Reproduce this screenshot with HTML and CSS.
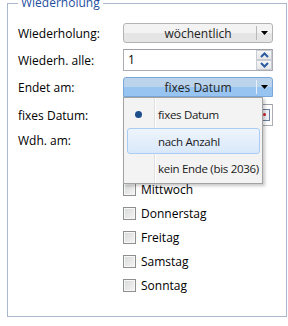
FILE: index.html
```html
<!DOCTYPE html>
<html lang="de">
  <head>
    <meta name="viewport" content="width=device-width, initial-scale=1.0" />
    <link rel="stylesheet" href="styles.css">
  </head>
  <body>
    <fieldset class="group">
      <legend class="group-title">Wiederholung</legend>

      <div class="form">
        <div class="row">
          <label class="lbl">Wiederholung:</label>
          <div class="combo">
            <span class="combo-text">wöchentlich</span>
            <span class="combo-btn">
              <svg width="7" height="4" viewBox="0 0 7 4"><path d="M0 0h7L3.5 4z" fill="#000"/></svg>
            </span>
          </div>
        </div>

        <div class="row row-tall">
          <label class="lbl">Wiederh. alle:</label>
          <div class="spin">
            <span class="spin-val">1</span>
            <span class="spin-btns">
              <span class="spin-btn">
                <svg width="9" height="6" viewBox="0 0 9 6"><path d="M1 5L4.5 1.5L8 5" fill="none" stroke="#2a5b9e" stroke-width="2"/></svg>
              </span>
              <span class="spin-btn">
                <svg width="9" height="6" viewBox="0 0 9 6"><path d="M1 1L4.5 4.5L8 1" fill="none" stroke="#2a5b9e" stroke-width="2"/></svg>
              </span>
            </span>
          </div>
        </div>

        <div class="row">
          <label class="lbl">Endet am:</label>
          <div class="combo combo-open">
            <span class="combo-text">fixes Datum</span>
            <span class="combo-btn">
              <svg width="7" height="4" viewBox="0 0 7 4"><path d="M0 0h7L3.5 4z" fill="#000"/></svg>
            </span>

            <ul class="menu">
              <li class="menu-item">
                <span class="menu-gutter"><span class="dot"></span></span>
                fixes Datum
              </li>
              <li class="menu-item menu-item-hover">
                <span class="menu-gutter"></span>
                nach Anzahl
              </li>
              <li class="menu-item">
                <span class="menu-gutter"></span>
                kein Ende (bis 2036)
              </li>
            </ul>
          </div>
        </div>

        <div class="row row-tall row-date">
          <label class="lbl">fixes Datum:</label>
          <div class="date">
            <span class="date-val"></span>
            <span class="cal-btn"><span class="cal-dot"></span></span>
          </div>
        </div>

        <div class="row row-days">
          <label class="lbl lbl-days">Wdh. am:</label>
          <ul class="days">
            <li class="day"><span class="check"></span>Montag</li>
            <li class="day"><span class="check"></span>Dienstag</li>
            <li class="day"><span class="check"></span>Mittwoch</li>
            <li class="day"><span class="check"></span>Donnerstag</li>
            <li class="day"><span class="check"></span>Freitag</li>
            <li class="day"><span class="check"></span>Samstag</li>
            <li class="day"><span class="check"></span>Sonntag</li>
          </ul>
        </div>
      </div>
    </fieldset>
  </body>
</html>
```

FILE: styles.css
```css
body {
  margin: 0;
  background: #fff;
  font-family: "Open Sans", "Liberation Sans", sans-serif;
  font-size: 12px;
  color: #000;
}

.group {
  box-sizing: border-box;
  width: 280px;
  margin: -4px 0 0 7px;
  padding: 13px 0 19px 10px;
  border: 1px solid #aab7cd;
  min-width: 0;
}
.group-title {
  padding: 0 3px;
  line-height: 14px;
  color: #1f4f9f;
}

.form {
  display: flex;
  flex-flow: column;
  gap: 6px;
}
.row {
  display: flex;
  align-items: center;
  height: 20px;
}
.row-tall {
  height: 22px;
}
.row-date {
  margin-top: 1px;
}
.row-days {
  height: auto;
  align-items: flex-start;
  margin-top: -3px;
}
.lbl {
  width: 105px;
  flex: none;
}
.lbl-days {
  line-height: 24px;
}

/* combo box */
.combo {
  position: relative;
  box-sizing: border-box;
  width: 150px;
  height: 20px;
  display: flex;
  align-items: center;
  border: 1px solid #b3b3b3;
  border-radius: 3px;
  background: linear-gradient(#f3f3f3 0 50%, #e5e5e5 50% 100%);
}
.combo-text {
  flex: 1;
  text-align: center;
  padding-left: 16px;
  color: #222;
}
.combo-btn {
  width: 15px;
  height: 14px;
  display: flex;
  align-items: center;
  justify-content: center;
  border-left: 1px solid #b8b8b8;
}
.combo-open {
  border-color: #7aa7d8;
  border-radius: 3px 3px 0 0;
  background: linear-gradient(#bcd3ec 0 50%, #98c4f1 50% 100%);
}
.combo-open .combo-btn {
  border-left-color: #e8f1fb;
}

/* drop-down list */
.menu {
  position: absolute;
  z-index: 2;
  top: 19px;
  left: -1px;
  box-sizing: border-box;
  width: 140px;
  margin: 0;
  padding: 3px 2px 1px 3px;
  list-style: none;
  border: 1px solid #a3a3a3;
  background:
    linear-gradient(90deg, transparent 30px, #e0e0e0 30px 31px, #fff 31px 32px, transparent 32px),
    #f3f3f3;
  box-shadow: 2px 2px 3px rgba(0, 0, 0, 0.22);
}
.menu-item {
  box-sizing: border-box;
  height: 26px;
  margin-bottom: 1px;
  display: flex;
  align-items: center;
  border: 1px solid transparent;
  border-radius: 3px;
  color: #1a1a1a;
  font-size: 11.5px;
  white-space: nowrap;
  letter-spacing: -0.3px;
}
.menu-item-hover {
  border-color: #a9cdf2;
  background: linear-gradient(#eef4fc, #d9e8fa);
}
.menu-gutter {
  flex: none;
  width: 21px;
  margin-right: 9px;
  display: flex;
  justify-content: center;
}
.dot {
  width: 7px;
  height: 7px;
  border-radius: 50%;
  background: #1d4f8c;
}

/* spin box */
.spin,
.date {
  box-sizing: border-box;
  width: 150px;
  height: 22px;
  display: flex;
  align-items: stretch;
  border: 1px solid #abadb3;
  border-top-color: #9da0a7;
  background: #fff;
}
.spin-val,
.date-val {
  flex: 1;
  padding-left: 4px;
  line-height: 20px;
}
.spin-btns {
  width: 16px;
  display: flex;
  flex-flow: column;
}
.spin-btn {
  flex: 1;
  display: flex;
  align-items: center;
  justify-content: center;
  border: 1px solid #c9cdd3;
  background: linear-gradient(#f6f6f6, #e4e6e9);
}

/* date field */
.cal-btn {
  position: relative;
  width: 8px;
  height: 10px;
  margin: 4px 2px 0 0;
  border: 1px solid #6b7fa0;
  background: #eef2f8;
}
.cal-dot {
  position: absolute;
  left: 2px;
  top: 3px;
  width: 3px;
  height: 3px;
  border-radius: 50%;
  background: #c22;
}

/* weekday check boxes */
.days {
  margin: 0;
  padding: 0;
  list-style: none;
}
.day {
  height: 24px;
  display: flex;
  align-items: center;
  gap: 5px;
}
.check {
  box-sizing: border-box;
  width: 13px;
  height: 13px;
  border: 1px solid #8e8f8f;
  background: linear-gradient(135deg, #d6d7d9, #f6f6f6);
  box-shadow: inset 0 0 0 1px #f7f7f7;
}
```
